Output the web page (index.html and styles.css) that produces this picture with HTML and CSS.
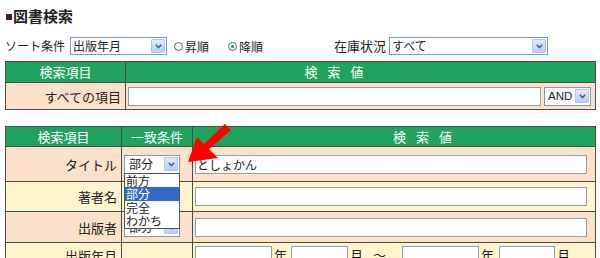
FILE: index.html
```html
<!DOCTYPE html>
<html lang="ja">
<head>
<meta charset="utf-8">
<title>図書検索</title>
<link rel="stylesheet" href="styles.css">
</head>
<body>
<div class="page">
  <h1 class="title"><span class="mark"></span>図書検索</h1>

  <div class="sortbar">
    <span class="lbl">ソート条件</span>
    <div class="select sel-sort"><span class="sel-text">出版年月</span><span class="sel-btn"><svg width="7" height="5" viewBox="0 0 7 5"><polyline points="0.8,0.8 3.5,3.6 6.2,0.8" fill="none" stroke="#4a5f86" stroke-width="1.6"/></svg></span></div>
    <span class="radio"></span><span class="rlbl">昇順</span>
    <span class="radio on"></span><span class="rlbl">降順</span>
    <span class="lbl stock">在庫状況</span>
    <div class="select sel-stock"><span class="sel-text">すべて</span><span class="sel-btn"><svg width="7" height="5" viewBox="0 0 7 5"><polyline points="0.8,0.8 3.5,3.6 6.2,0.8" fill="none" stroke="#4a5f86" stroke-width="1.6"/></svg></span></div>
  </div>

  <div class="grid t1">
    <div class="hd">検索項目</div>
    <div class="hd hd-val1">検 索 値</div>
    <div class="cell lab peach">すべての項目</div>
    <div class="cell peach"><span class="field f-all"></span><div class="select sel-and"><span class="sel-text latin">AND</span><span class="sel-btn"><svg width="7" height="5" viewBox="0 0 7 5"><polyline points="0.8,0.8 3.5,3.6 6.2,0.8" fill="none" stroke="#4a5f86" stroke-width="1.6"/></svg></span></div></div>
  </div>

  <div class="grid t2">
    <div class="hd">検索項目</div>
    <div class="hd">一致条件</div>
    <div class="hd hd-val2">検 索 値</div>

    <div class="cell lab peach">タイトル</div>
    <div class="cell peach open">
      <div class="select sel-match"><span class="sel-text">部分</span><span class="sel-btn"><svg width="7" height="5" viewBox="0 0 7 5"><polyline points="0.8,0.8 3.5,3.6 6.2,0.8" fill="none" stroke="#4a5f86" stroke-width="1.6"/></svg></span>
        <ul class="droplist">
          <li>前方</li>
          <li class="hl">部分</li>
          <li>完全</li>
          <li>わかち</li>
        </ul>
      </div>
    </div>
    <div class="cell peach"><span class="field f-val">としょかん</span></div>

    <div class="cell lab yellow">著者名</div>
    <div class="cell yellow"><div class="select sel-match"><span class="sel-text">部分</span><span class="sel-btn"><svg width="7" height="5" viewBox="0 0 7 5"><polyline points="0.8,0.8 3.5,3.6 6.2,0.8" fill="none" stroke="#4a5f86" stroke-width="1.6"/></svg></span></div></div>
    <div class="cell yellow"><span class="field f-val"></span></div>

    <div class="cell lab peach">出版者</div>
    <div class="cell peach"><div class="select sel-match"><span class="sel-text">部分</span><span class="sel-btn"><svg width="7" height="5" viewBox="0 0 7 5"><polyline points="0.8,0.8 3.5,3.6 6.2,0.8" fill="none" stroke="#4a5f86" stroke-width="1.6"/></svg></span></div></div>
    <div class="cell peach"><span class="field f-val"></span></div>

    <div class="cell lab yellow top">出版年月</div>
    <div class="cell yellow top"></div>
    <div class="cell yellow top date">
      <span class="field f-y"></span><span class="u">年</span>
      <span class="field f-m"></span><span class="u">月</span>
      <span class="tilde">〜</span>
      <span class="field f-y"></span><span class="u">年</span>
      <span class="field f-m2"></span><span class="u">月</span>
    </div>
  </div>

  <svg class="arrow" width="60" height="50" viewBox="180 112 60 50">
    <polygon points="225,119 231,125 209,144 218,153 188,157 197,132 204,139" fill="#ff0000"/>
  </svg>
</div>
</body>
</html>
```

FILE: styles.css
```css
* { box-sizing: border-box; }
html, body { margin: 0; padding: 0; background: #fff; }
body {
  font-family: "Noto Sans CJK JP", "Noto Sans", sans-serif;
  font-size: 13px;
  color: #222;
  width: 600px;
  height: 258px;
  overflow: hidden;
}
.page {
  position: relative;
  padding-left: 5px;
}
.title {
  margin: 5px 0 0 0;
  font-size: 15px;
  line-height: 22px;
  font-weight: bold;
  color: #222;
  display: flex;
  align-items: center;
}
.mark {
  display: inline-block;
  width: 6px;
  height: 6px;
  background: #3a2020;
  margin: 2px 1px 0 1px;
}
.sortbar {
  margin-top: 10px;
  height: 18px;
  display: flex;
  align-items: center;
  font-size: 12px;
}
.lbl { line-height: 18px; }
.select {
  position: relative;
  display: flex;
  align-items: center;
  background: #fff;
  border: 1px solid #7f9db9;
  height: 18px;
}
.sel-text {
  flex: 1;
  padding-left: 2px;
  line-height: 16px;
  white-space: nowrap;
  font-size: 12px;
}
.latin { font-family: "Liberation Sans", Arial, sans-serif; font-size: 11.5px; padding-left: 3px; }
.sel-btn {
  width: 14px;
  height: 14px;
  margin-right: 1px;
  border: 1px solid #b4c6ee;
  border-radius: 1px;
  background: linear-gradient(#e1eafe, #b8cdf7);
  display: flex;
  align-items: center;
  justify-content: center;
  flex: none;
}
.sel-sort { width: 97px; margin-left: 5px; }
.sel-stock { width: 159px; margin-left: 3px; }
.radio {
  width: 9px;
  height: 9px;
  border: 1px solid #5a6a80;
  border-radius: 50%;
  background: #f4f4f4;
  margin-left: 7px;
  position: relative;
}
.radio + .rlbl { margin-left: 2px; }
.rlbl + .radio { margin-left: 19px; }
.radio.on::after {
  content: "";
  position: absolute;
  left: 2px;
  top: 2px;
  width: 3px;
  height: 3px;
  border-radius: 50%;
  background: #21a121;
}
.stock { margin-left: 71px; font-size: 13px; }

.grid {
  display: grid;
  background: #4a4a4a;
  gap: 1px;
  padding: 1px;
  width: 591px;
}
.t1 {
  margin-top: 6px;
  grid-template-columns: 119px 1fr;
  grid-template-rows: 20px 26px;
}
.t2 {
  margin-top: 16px;
  grid-template-columns: 115px 70px 1fr;
  grid-template-rows: 19px 34px 29px 30px 30px;
}
.hd {
  background: #22a35d;
  color: #fff;
  display: flex;
  align-items: center;
  justify-content: center;
  line-height: 16px;
}
.hd-val1 { padding-right: 53px; word-spacing: 7px; }
.hd-val2 { padding-left: 57px; word-spacing: 7px; }
.cell {
  display: flex;
  align-items: center;
  position: relative;
}
.cell.top { align-items: flex-start; padding-top: 3px; }
.lab { justify-content: flex-end; padding-right: 4px; }
.peach { background: #fce2ca; }
.yellow { background: #fff5cc; }
.field {
  display: inline-block;
  height: 19px;
  background: #fff;
  border: 1px solid #8f9db3;
  line-height: 17px;
  padding-left: 1px;
  white-space: nowrap;
  font-size: 12px;
}
.f-all { width: 413px; margin-left: 2px; }
.sel-and { width: 47px; margin-left: 3px; height: 19px; }
.f-val { width: 392px; margin-left: 2px; }
.sel-match { width: 56px; margin-left: 2px; height: 19px; }
.sel-match .sel-text { padding-left: 4px; }
.open { z-index: 3; }
.droplist {
  list-style: none;
  margin: 0;
  padding: 0;
  position: absolute;
  left: -1px;
  top: 17px;
  width: 56px;
  background: #fff;
  border: 1px solid #555;
  z-index: 5;
  font-size: 12px;
}
.droplist li {
  height: 13.5px;
  line-height: 13.5px;
  padding-left: 1px;
  white-space: nowrap;
}
.droplist li.hl { background: #3169c6; color: #fff; }
.f-y { width: 77px; margin-left: 2px; }
.f-m { width: 57px; margin-left: 4px; }
.f-m2 { width: 56px; margin-left: 5px; }
.u { margin-left: 2px; line-height: 18px; }
.tilde { margin-left: 10px; margin-right: 14px; line-height: 18px; }
.arrow {
  position: absolute;
  left: 180px;
  top: 112px;
  z-index: 10;
}
```
